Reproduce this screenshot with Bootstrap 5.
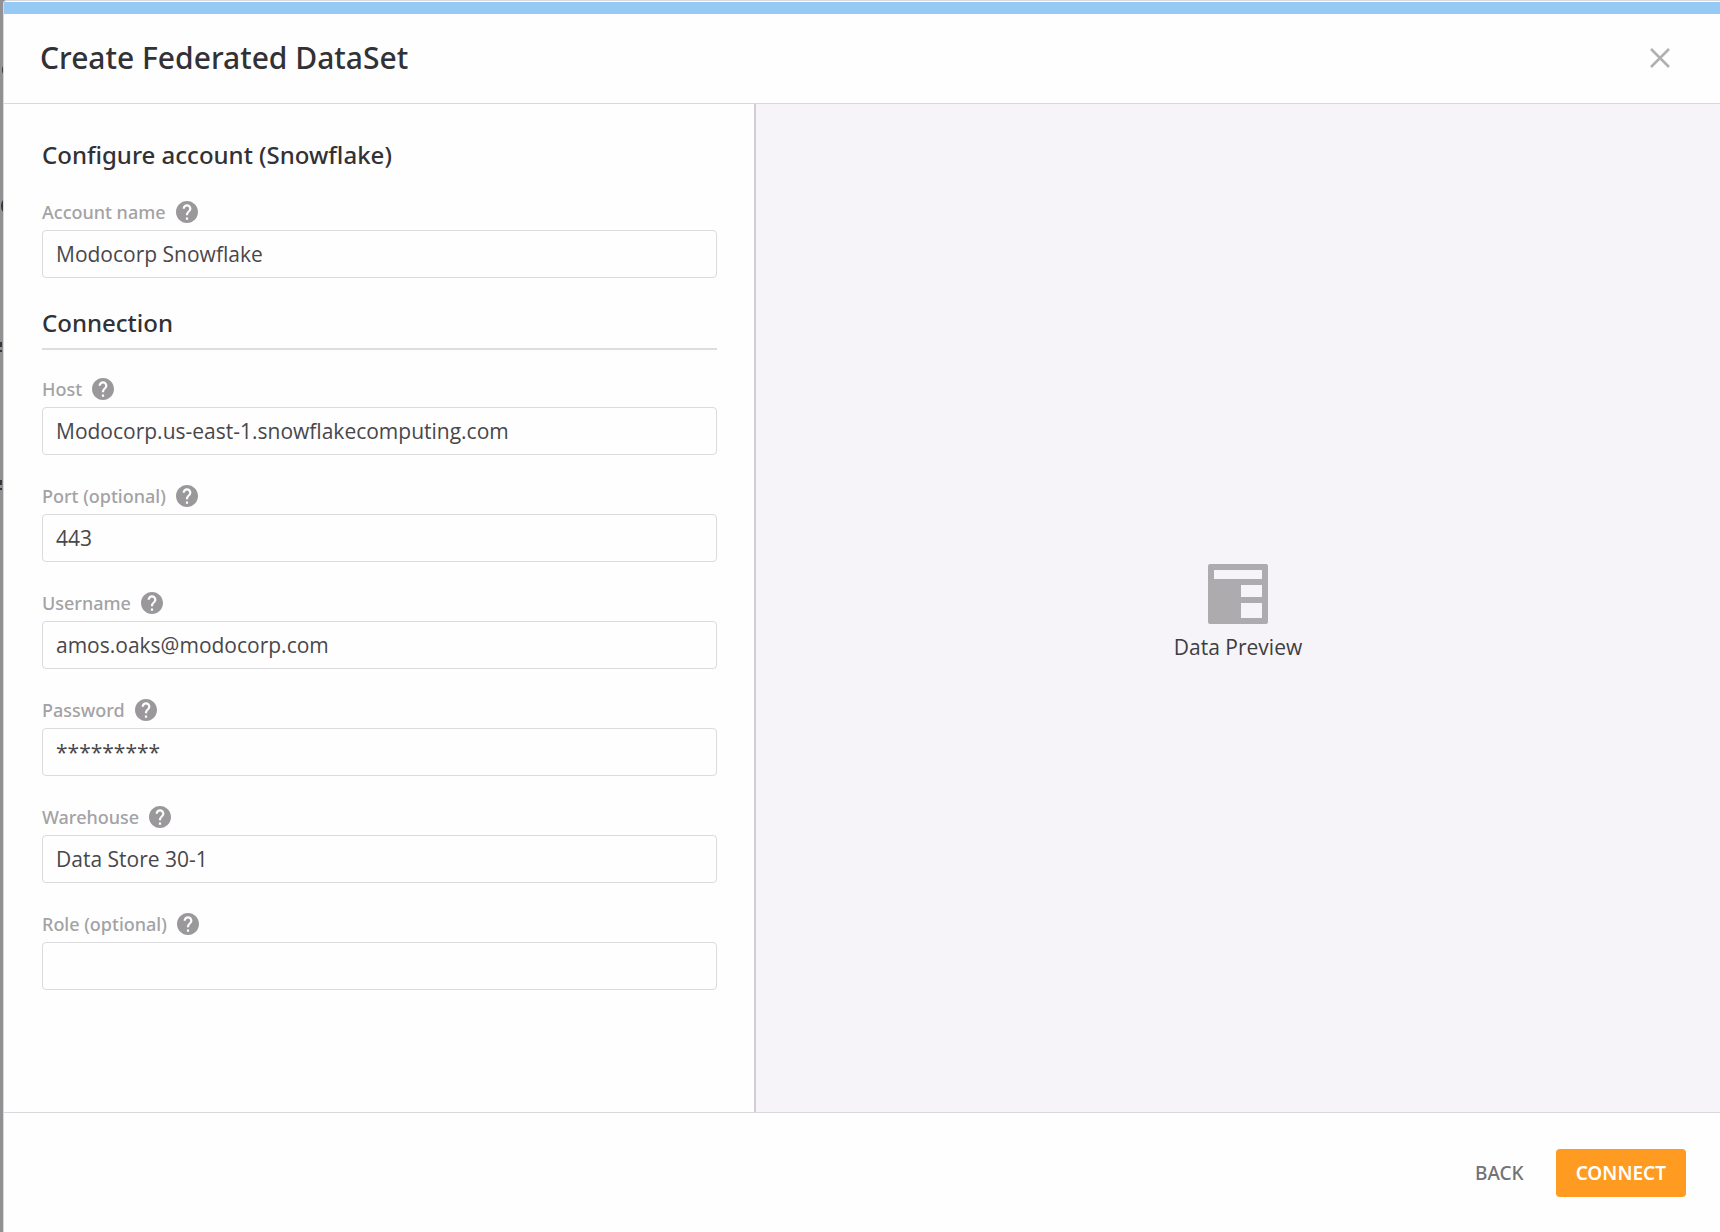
<!DOCTYPE html>
<html lang="en">
<head>
<meta charset="utf-8">
<meta name="viewport" content="width=device-width, initial-scale=1">
<title>Create Federated DataSet</title>
<link rel="stylesheet" href="https://cdn.jsdelivr.net/npm/bootstrap@5.3.0/dist/css/bootstrap.min.css">
<style>
body{font-family:"Open Sans","Noto Sans",sans-serif;background:#929093;color:#323135}
.dialog-head h1,.pane-title,.section-title,.field-head label,.dialog-foot .btn{font-family:"Noto Sans","Open Sans",sans-serif}
.dialog{border-left:1px solid #dad8dc;border-top:1px solid #dad8dc;background:#fefefe;border-top-left-radius:4px}
.backdrop-edge{width:3px}
.accent{height:12px;background:#97c9f5;margin-top:1px}
.dialog-head{height:90px;padding:0 48px 2px 36px;border-bottom:1px solid #d9d8dc}
.dialog-head h1{font-size:30px;font-weight:500;line-height:40px}
.close-x{width:24px;height:24px;color:#b0afb2}
.form-pane{width:calc(44% - 3px);padding:35px 37px 0 38px;border-right:2px solid #d0ced3}
.pane-title{font-size:24px;font-weight:500;line-height:32px;margin-bottom:30px}
.section-title{font-size:24px;font-weight:500;line-height:30px;padding-bottom:10px;border-bottom:2px solid #dddce0;margin:30px 0 28px}
.field{margin-bottom:30px}
.field-head{height:22px;margin-bottom:7px;gap:10px}
.field-head label{font-size:18px;font-weight:500;line-height:22px;color:#a3a2a5}
.help{width:22px;height:22px;color:#9a989b}
.field .form-control{height:48px;padding:0 13px;border:1px solid #dbdadd;border-radius:4px;font-size:21px;font-weight:400;color:#48474b;background:#fefefe}
.preview-pane{background:#f6f4f8;color:#3e3d41;font-size:21px;line-height:28px;gap:9px;padding-top:8px}
.dialog-foot{height:120px;padding:0 34px;gap:16px;border-top:1px solid #d9d8dc}
.dialog-foot .btn{height:48px;font-size:19px;line-height:24px;border:0;border-radius:4px}
.dialog-foot .btn-back{padding:0 16px;color:#737276;font-weight:500}
.dialog-foot .btn-connect{padding:0 20px;background:#ff9b20;color:#fff;font-weight:600}
</style>
<script src="https://cdn.jsdelivr.net/npm/bootstrap@5.3.0/dist/js/bootstrap.bundle.min.js"></script>
</head>
<body>
<svg class="d-none" aria-hidden="true">
<symbol id="help-icon" viewBox="2 2 20 20"><path fill="currentColor" d="M12 2C6.48 2 2 6.48 2 12s4.480 10 10 10 10-4.480 10-10S17.520 2 12 2zm1 17h-2v-2h2v2zm2.070-7.750l-.9.920C13.450 12.900 13 13.500 13 15h-2v-.5c0-1.100.45-2.100 1.170-2.830l1.240-1.260c.37-.36.59-.86.59-1.410 0-1.100-.9-2-2-2s-2 .9-2 2H8c0-2.210 1.790-4 4-4s4 1.790 4 4c0 .88-.36 1.680-.93 2.250z"/></symbol>
</svg>
<div class="d-flex min-vh-100">
<div class="backdrop-edge flex-shrink-0"><svg class="d-block" width="3" height="500" viewBox="0 0 3 500" fill="#38363a" aria-hidden="true"><ellipse cx="4" cy="70" rx="2" ry="4"/><ellipse cx="4" cy="206" rx="3" ry="6"/><path d="M0 342h2v5H0zM0 350h2v2H0zM0 480h2v5H0zM0 488h2v2H0z"/></svg></div>
<div class="dialog d-flex flex-column flex-grow-1" role="dialog" aria-labelledby="dialog-title">
<div class="accent"></div>
<header class="dialog-head d-flex align-items-center justify-content-between">
<h1 id="dialog-title" class="m-0">Create Federated DataSet</h1>
<button type="button" class="btn p-0 border-0 lh-1" aria-label="Close"><svg class="close-x" viewBox="0 0 24 24"><path d="M3 3L21 21M21 3L3 21" fill="none" stroke="currentColor" stroke-width="2.500"/></svg></button>
</header>
<main class="d-flex flex-grow-1">
<form class="form-pane flex-shrink-0" id="account-form">
<h2 class="pane-title">Configure account (Snowflake)</h2>
<div class="field"><div class="field-head d-flex align-items-center"><label for="account">Account name</label><svg class="help"><use href="#help-icon"/></svg></div><input class="form-control" id="account" type="text" value="Modocorp Snowflake"></div>
<h3 class="section-title">Connection</h3>
<div class="field"><div class="field-head d-flex align-items-center"><label for="host">Host</label><svg class="help"><use href="#help-icon"/></svg></div><input class="form-control" id="host" type="text" value="Modocorp.us-east-1.snowflakecomputing.com"></div>
<div class="field"><div class="field-head d-flex align-items-center"><label for="port">Port (optional)</label><svg class="help"><use href="#help-icon"/></svg></div><input class="form-control" id="port" type="text" value="443"></div>
<div class="field"><div class="field-head d-flex align-items-center"><label for="user">Username</label><svg class="help"><use href="#help-icon"/></svg></div><input class="form-control" id="user" type="text" value="amos.oaks@modocorp.com"></div>
<div class="field"><div class="field-head d-flex align-items-center"><label for="pass">Password</label><svg class="help"><use href="#help-icon"/></svg></div><input class="form-control" id="pass" type="text" value="*********"></div>
<div class="field"><div class="field-head d-flex align-items-center"><label for="warehouse">Warehouse</label><svg class="help"><use href="#help-icon"/></svg></div><input class="form-control" id="warehouse" type="text" value="Data Store 30-1"></div>
<div class="field"><div class="field-head d-flex align-items-center"><label for="role">Role (optional)</label><svg class="help"><use href="#help-icon"/></svg></div><input class="form-control" id="role" type="text"></div>
</form>
<section class="preview-pane flex-grow-1 d-flex flex-column align-items-center justify-content-center">
<svg width="60" height="60" viewBox="0 0 60 60" aria-hidden="true"><rect width="60" height="60" rx="2" fill="#adabae"/><path fill="#f6f4f8" d="M6 6H54V15H6zM33 21H54V33H33zM33 39H54V54H33z"/></svg>
<div>Data Preview</div>
</section>
</main>
<footer class="dialog-foot d-flex align-items-center justify-content-end">
<button type="button" class="btn btn-back">BACK</button>
<button type="submit" form="account-form" class="btn btn-connect">CONNECT</button>
</footer>
</div>
</div>
</body>
</html>
